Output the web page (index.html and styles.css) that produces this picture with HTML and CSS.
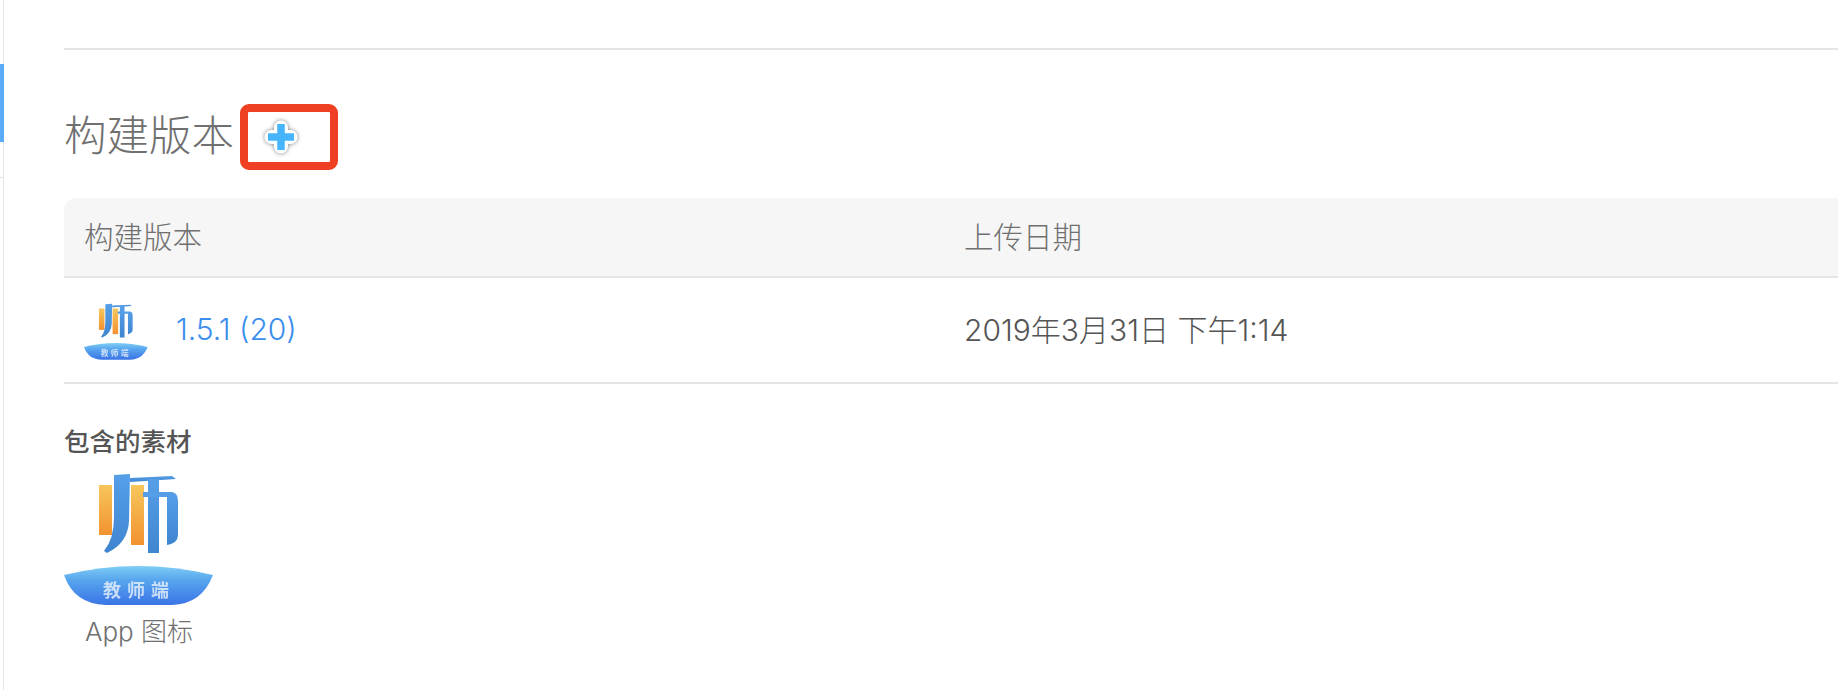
FILE: index.html
```html
<!DOCTYPE html>
<html lang="zh-CN">
<head>
    <meta charset="UTF-8">
    <title>构建版本</title>
    <link rel="stylesheet" href="styles.css">
</head>
<body>
    <svg class="defs" width="0" height="0" aria-hidden="true">
        <defs>
            <linearGradient id="orange" x1="0" y1="0" x2="0" y2="1">
                <stop offset="0" stop-color="#f7c65c"/>
                <stop offset="1" stop-color="#f2922f"/>
            </linearGradient>
            <linearGradient id="blue" x1="0" y1="0" x2="0" y2="1">
                <stop offset="0" stop-color="#569fe8"/>
                <stop offset="1" stop-color="#3f85d0"/>
            </linearGradient>
            <linearGradient id="boat" x1="0" y1="0" x2="0" y2="1">
                <stop offset="0" stop-color="#7fcdf5"/>
                <stop offset="0.35" stop-color="#58a6ee"/>
                <stop offset="1" stop-color="#3a74e6"/>
            </linearGradient>
            <filter id="soft" x="-5%" y="-5%" width="110%" height="110%">
                <feGaussianBlur stdDeviation="0.7"/>
            </filter>
            <symbol id="logo" viewBox="0 0 150 134">
                <g filter="url(#soft)">
                    <rect x="35" y="12" width="13" height="50" fill="url(#orange)"/>
                    <rect x="67" y="12" width="13" height="60" fill="url(#orange)"/>
                    <path d="M50 2 L66 1 L65 48 Q64 70 43 80 L40 78 Q50 66 50 44 Z" fill="url(#blue)"/>
                    <path d="M66 5 L108 3 L112 6 L66 9 Z" fill="url(#blue)"/>
                    <path d="M84 6 H95 V80 H84 Z" fill="url(#blue)"/>
                    <path d="M79 19 H108 Q114 20 114 28 V62 Q114 70 103 72 V24 H79 Z" fill="url(#blue)"/>
                    <path d="M0 102 Q74 84 149 102 Q138 131 108 132 H42 Q10 131 0 102 Z" fill="url(#boat)"/>
                    <text class="logo-text" x="75" y="124" text-anchor="middle">教师端</text>
                </g>
            </symbol>
        </defs>
    </svg>

    <div class="page">
        <aside class="rail">
            <div class="rail-active"></div>
            <div class="rail-tick"></div>
        </aside>

        <main class="content">
            <div class="rule"></div>

            <div class="title-row">
                <h1 class="title">构建版本</h1>
                <div class="add-box">
                    <svg class="add-icon" width="40" height="40" viewBox="0 0 40 40">
                        <path d="M20 10.5 V29.5 M10.5 20 H29.5" stroke="#fff" stroke-width="14" stroke-linecap="round"/>
                        <path d="M20 7 V33 M7 20 H33" stroke="#47b5fb" stroke-width="7.5"/>
                    </svg>
                </div>
            </div>

            <div class="build-table">
                <div class="table-row table-head">
                    <div class="col-build">构建版本</div>
                    <div class="col-date">上传日期</div>
                </div>
                <div class="table-row table-body">
                    <div class="col-build">
                        <svg class="logo-small"><use href="#logo"/></svg>
                        <a class="build-link">1.5.1 (20)</a>
                    </div>
                    <div class="col-date">2019年3月31日 下午1:14</div>
                </div>
            </div>

            <h2 class="assets-title">包含的素材</h2>
            <div class="asset">
                <svg class="logo-large"><use href="#logo"/></svg>
                <div class="asset-name">App 图标</div>
            </div>
        </main>
    </div>
</body>
</html>
```

FILE: styles.css
```css
html, body {
    margin: 0;
    height: 690px;
    overflow: hidden;
    background: #fff;
}

body {
    font-family: Inter, "Noto Sans CJK SC", sans-serif;
    color: #555;
}

.defs {
    position: absolute;
}

.page {
    display: flex;
    height: 690px;
}

/* Left edge of the sidebar */
.rail {
    width: 3px;
    flex: none;
    border-right: 1px solid #e4e4e4;
    padding-top: 64px;
}

.rail-active {
    width: 4px;
    height: 78px;
    background: #5aabf8;
}

.rail-tick {
    height: 1px;
    margin-top: 35px;
    background: #e4e4e4;
}

.content {
    flex: 1;
    padding-left: 60px;
    padding-top: 48px;
}

.rule {
    height: 2px;
    background: #e5e5e5;
}

.title-row {
    display: flex;
    align-items: center;
    gap: 6px;
    margin-top: 54px;
    height: 66px;
}

.title {
    margin: 0;
    font-size: 42.5px;
    font-weight: 300;
    color: #707070;
    line-height: 64px;
    padding-bottom: 2px;
}

.add-box {
    width: 82px;
    height: 50px;
    border: 8px solid #f04023;
    border-radius: 9px;
    display: flex;
    align-items: center;
}

.add-icon {
    margin-left: 13px;
    filter: drop-shadow(0 0 2px rgba(0, 0, 0, 0.5));
}

.build-table {
    margin-top: 28px;
}

.table-row {
    display: grid;
    grid-template-columns: 900px 1fr;
    border-bottom: 2px solid #e5e5e5;
    align-items: center;
}

.table-head {
    height: 78px;
    background: #f6f6f6;
    border-top-left-radius: 12px;
    font-size: 29.5px;
    font-weight: 300;
    color: #707070;
    line-height: 38px;
}

.table-body {
    height: 104px;
    font-size: 30px;
    font-weight: 300;
}

.table-body .col-date {
    padding-bottom: 5px;
}

.col-build {
    display: flex;
    align-items: center;
    padding-left: 20px;
}

.logo-small {
    width: 64px;
    height: 58px;
    flex: none;
    margin-top: 3px;
}

.build-link {
    margin-left: 28px;
    margin-bottom: 2px;
    color: #3a8fee;
}

.assets-title {
    margin: 41px 0 0 0;
    font-size: 25.5px;
    font-weight: 500;
    color: #555;
    line-height: 34px;
}

.asset {
    width: 150px;
    margin-top: 14px;
    text-align: center;
}

.logo-large {
    display: block;
    width: 150px;
    height: 134px;
}

.asset-name {
    margin-top: 7px;
    font-size: 26px;
    font-weight: 300;
    line-height: 36px;
    color: #707070;
}

.logo-text {
    font-family: "Noto Sans CJK SC", sans-serif;
    font-size: 18px;
    font-weight: 700;
    letter-spacing: 6px;
    fill: #fff;
    opacity: 0.7;
}
```
